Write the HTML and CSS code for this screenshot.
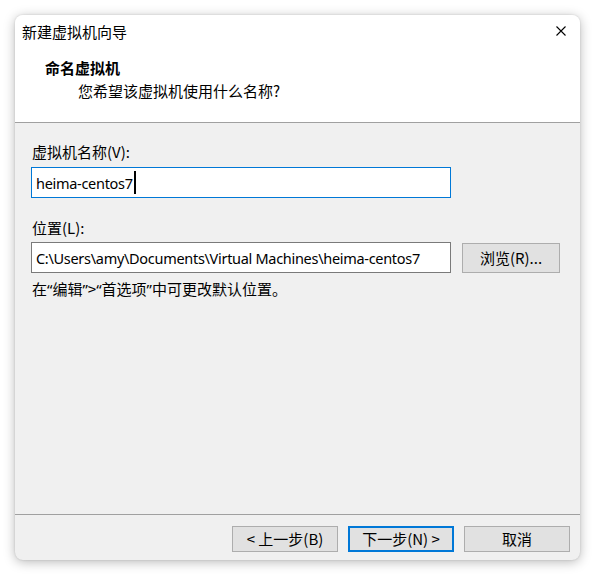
FILE: index.html
```html
<!DOCTYPE html>
<html lang="zh-CN">
<head>
<meta charset="utf-8">
<title>新建虚拟机向导</title>
<link rel="stylesheet" href="styles.css">
</head>
<body>
<div class="window">
  <div class="header">
    <div class="titlebar">
      <span class="title">新建虚拟机向导</span>
      <svg class="close" width="10" height="10" viewBox="0 0 10 10"><path d="M0.5 0.5 L9.5 9.5 M9.5 0.5 L0.5 9.5" stroke="#000" stroke-width="1.1" fill="none"/></svg>
    </div>
    <div class="heading">命名虚拟机</div>
    <div class="subtitle">您希望该虚拟机使用什么名称?</div>
  </div>
  <div class="content">
    <div class="label">虚拟机名称(V):</div>
    <div class="input focused"><span class="latin">heima-centos7</span><span class="caret"></span></div>
    <div class="label label-loc">位置(L):</div>
    <div class="row">
      <div class="input"><span class="latin">C:\Users\amy\Documents\Virtual Machines\heima-centos7</span></div>
      <div class="btn browse">浏览(R)...</div>
    </div>
    <div class="note">在<span class="q">“</span>编辑<span class="q">”</span>&gt;<span class="q">“</span>首选项<span class="q">”</span>中可更改默认位置。</div>
  </div>
  <div class="footer">
    <div class="btn">&lt; 上一步(B)</div>
    <div class="btn default">下一步(N) &gt;</div>
    <div class="btn">取消</div>
  </div>
</div>
</body>
</html>
```
FILE: styles.css
```css
html, body {
  margin: 0;
  padding: 0;
  background: #ffffff;
}
body {
  padding: 15px;
  font-family: "Noto Sans CJK SC", "Noto Sans", sans-serif;
  font-size: 15px;
  color: #000;
}
.window {
  width: 565px;
  height: 545px;
  border-radius: 8px;
  overflow: hidden;
  display: flex;
  flex-direction: column;
  box-shadow: 0 2px 12px rgba(0,0,0,0.28), 0 0 2px rgba(0,0,0,0.15);
  background: #f0f0f0;
}
.header {
  background: #fff;
  border-bottom: 1px solid #a0a0a0;
  height: 107px;
  box-sizing: content-box;
}
.titlebar {
  height: 34px;
  display: flex;
  align-items: center;
  justify-content: space-between;
  padding: 0 14px 0 7px;
}
.title {
  line-height: 20px;
}
.close {
  display: block;
  margin-top: -3px;
}
.heading {
  font-weight: bold;
  line-height: 20px;
  margin-top: 9px;
  padding-left: 30px;
}
.subtitle {
  line-height: 20px;
  margin-top: 3px;
  padding-left: 63px;
}
.content {
  flex: 1;
  padding: 19px 0 0 16px;
  border-bottom: 1px solid #a0a0a0;
}
.label {
  line-height: 20px;
  padding-left: 1px;
}
.label-loc {
  margin-top: 20px;
}
.input {
  box-sizing: border-box;
  width: 420px;
  height: 31px;
  margin-top: 5px;
  border: 1px solid #7a7a7a;
  background: #fff;
  padding-left: 4px;
  display: flex;
  align-items: center;
  white-space: nowrap;
  overflow: hidden;
}
.input.focused {
  border-color: #0078d7;
}
.latin {
  font-family: "Noto Sans", sans-serif;
  font-size: 14.5px;
  letter-spacing: -0.3px;
  line-height: 20px;
}
.caret {
  display: inline-block;
  width: 2px;
  height: 23px;
  background: #000;
  margin-left: 1px;
}
.row {
  display: flex;
  align-items: flex-start;
  gap: 11px;
  margin-top: 4px;
}
.row .input {
  margin-top: 0;
}
.btn {
  box-sizing: border-box;
  width: 106px;
  height: 26px;
  background: #e1e1e1;
  border: 1px solid #adadad;
  display: flex;
  align-items: center;
  justify-content: center;
  line-height: 20px;
}
.browse {
  width: 98px;
  height: 30px;
  margin-top: 1px;
}
.note {
  line-height: 20px;
  margin-top: 6px;
  padding-left: 1px;
}
.q {
  font-family: "Noto Sans", sans-serif;
}
.footer {
  height: 45px;
  display: flex;
  justify-content: flex-end;
  gap: 10px;
  padding: 11px 10px 0 0;
  box-sizing: border-box;
}
.btn.default {
  border: 2px solid #0078d7;
}
```
